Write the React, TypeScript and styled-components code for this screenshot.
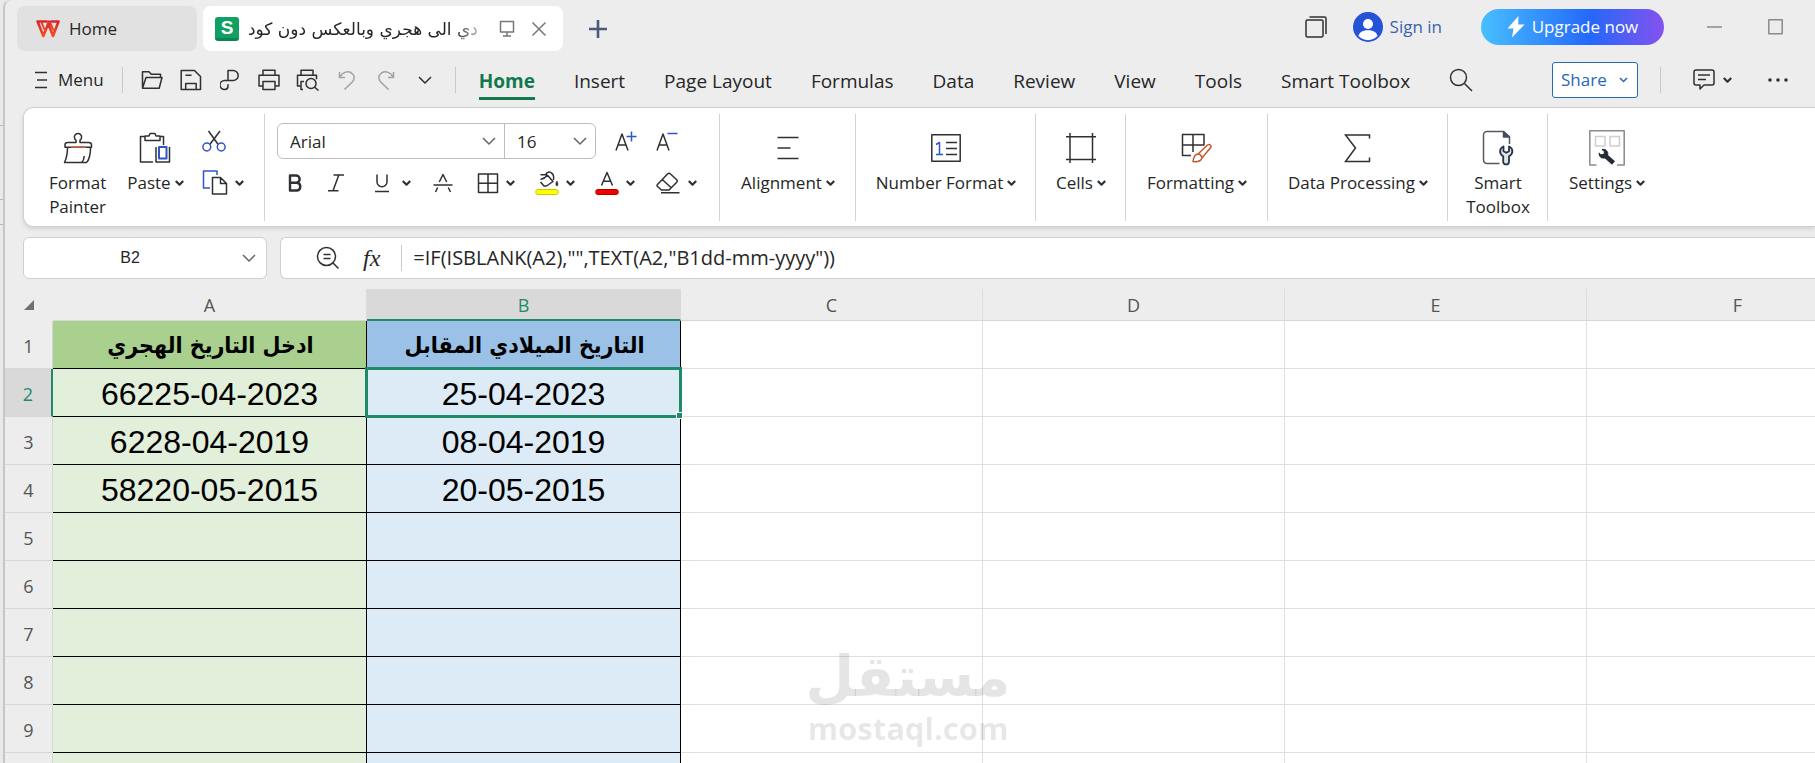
import React from 'react';
import styled, { createGlobalStyle } from 'styled-components';

const INK = '#2f3033';
const BLUE = '#2f55c4';
const GREEN = '#1f8a69';
const UI_FONT = '"Open Sans", "Noto Sans", "DejaVu Sans", sans-serif';

const GlobalStyle = createGlobalStyle`
  *, *::before, *::after { box-sizing: border-box; }
  body { margin: 0; background: #e8e8e8; font-family: ${UI_FONT}; color: #262626; overflow: hidden; }
  button, input, select { font: inherit; color: inherit; }
  svg { display: block; flex: none; }
`;

/* ---------- shell ---------- */

const Desktop = styled.div`
  display: flex;
  height: 100vh;
`;

const BackdropEdge = styled.div`
  flex: none;
  width: 3px;
  padding-top: 125px;
  background: #e9e9e9;
`;

const BackdropLine = styled.div<{ $gap: number }>`
  height: 1px;
  margin-bottom: ${(p) => p.$gap}px;
  background: #b9b9b9;
`;

const Window = styled.div`
  flex: 1;
  min-width: 0;
  display: flex;
  flex-direction: column;
  background: #ededed;
  border-left: 2px solid #c6c6c6;
  border-top-left-radius: 8px;
`;

const PlainButton = styled.button`
  display: flex;
  align-items: center;
  padding: 0;
  border: 0;
  background: none;
  white-space: nowrap;
  cursor: pointer;
`;

const Separator = styled.div`
  flex: none;
  width: 1px;
  height: 26px;
  background: #c9c9c9;
`;

/* ---------- title bar ---------- */

const TitleBar = styled.header`
  display: flex;
  align-items: center;
  height: 52px;
  padding: 6px 32px 1px 12px;
`;

const HomeTab = styled(PlainButton)`
  width: 180px;
  height: 45px;
  padding-left: 19px;
  gap: 9px;
  border-radius: 8px;
  background: #e1e1e1;
  font-size: 17px;
`;

const FileTab = styled.div`
  display: flex;
  align-items: center;
  width: 360px;
  height: 45px;
  margin: 0 26px 0 6px;
  padding: 0 16px 0 12px;
  border-radius: 8px;
  background: #fff;
`;

const SheetBadge = styled.span`
  flex: none;
  width: 24px;
  height: 24px;
  border-radius: 3px;
  background: linear-gradient(#10a063 86%, #0b8450 86%);
  color: #fff;
  font: bold 19px/22px "Liberation Sans", sans-serif;
  text-align: center;
`;

const FileName = styled.span`
  flex: 1;
  min-width: 0;
  margin: 0 8px 0 9px;
  direction: rtl;
  display: flex;
  justify-content: flex-end;
  overflow: hidden;
  white-space: nowrap;
  font-family: "DejaVu Sans", sans-serif;
  font-size: 17px;
  line-height: 32px;
  mask-image: linear-gradient(to left, transparent, #000 36px);
`;

const CloseButton = styled(PlainButton)`
  margin-left: 15px;
`;

const TitleActions = styled.div`
  display: flex;
  align-items: center;
  height: 36px;
  margin: 0 0 4px auto;
`;

const SignIn = styled(PlainButton)`
  gap: 7px;
  margin: 0 39px 0 26px;
  color: #3c63ae;
  font-size: 17px;
`;

const Upgrade = styled(PlainButton)`
  width: 183px;
  height: 36px;
  margin-right: 43px;
  justify-content: center;
  gap: 7px;
  border-radius: 18px;
  background: linear-gradient(90deg, #48bfff, #2468fa 60%, #8552ee);
  color: #fff;
  font-size: 17px;
`;

const WindowButton = styled(PlainButton)`
  & + & { margin-left: 46px; }
`;

/* ---------- menu bar ---------- */

const MenuBar = styled.nav`
  display: flex;
  align-items: center;
  height: 55px;
  padding: 0 27px 0 30px;
`;

const MenuButton = styled(PlainButton)`
  gap: 11px;
  margin-right: 18px;
  font-size: 17px;
`;

const QuickTools = styled.div`
  display: flex;
  gap: 17px;
  margin: 0 19px 0 18px;
`;

const QuickButton = styled(PlainButton)`
  width: 22px;
  height: 24px;
  justify-content: center;
`;

const MenuTabs = styled.div`
  display: flex;
  align-items: center;
  gap: 39px;
  margin: 1px 0 0 23px;
`;

const MenuTab = styled(PlainButton)<{ $active?: boolean }>`
  height: 40px;
  padding-top: 4px;
  border-bottom: 3px solid ${(p) => (p.$active ? '#12784f' : 'transparent')};
  color: ${(p) => (p.$active ? '#12784f' : '#262626')};
  font-size: 19px;
  font-weight: ${(p) => (p.$active ? 700 : 400)};
`;

const MenuRight = styled.div`
  display: flex;
  align-items: center;
  margin-left: auto;
`;

const ShareButton = styled(PlainButton)`
  width: 86px;
  height: 36px;
  margin-right: 22px;
  padding: 0 9px 0 8px;
  justify-content: space-between;
  border: 1px solid #2768b8;
  border-radius: 3px;
  background: #fff;
  color: #2768b8;
  font-size: 17px;
`;

const CommentButton = styled(PlainButton)`
  gap: 8px;
  margin: 0 36px 0 32px;
`;

/* ---------- ribbon ---------- */

const Ribbon = styled.section`
  display: flex;
  height: 120px;
  margin-left: 18px;
  flex: none;
  border: 1px solid #d0d0d0;
  border-right: 0;
  border-radius: 10px 0 0 10px;
  background: #fff;
  box-shadow: 0 2px 4px rgba(0, 0, 0, 0.12);
`;

const Group = styled.div<{ $width: number; $start?: number }>`
  position: relative;
  flex: none;
  display: flex;
  justify-content: ${(p) => (p.$start === undefined ? 'center' : 'flex-start')};
  width: ${(p) => p.$width}px;
  padding-left: ${(p) => p.$start ?? 0}px;

  &:not(:last-child)::after {
    content: '';
    position: absolute;
    right: 0;
    top: 6px;
    bottom: 5px;
    width: 1px;
    background: #d3d3d3;
  }
`;

const BigButton = styled(PlainButton)<{ $gap?: number }>`
  flex-direction: column;
  gap: 5px;
  padding-top: 22px;
  align-items: center;
  justify-content: flex-start;
  font-size: 17px;
  line-height: 24px;
  margin-right: ${(p) => p.$gap ?? 0}px;
`;

const BigIcon = styled.span`
  display: grid;
  place-items: center;
  height: 36px;
`;

const BigLabel = styled.span`
  display: flex;
  align-items: center;
  gap: 4px;
  white-space: pre-line;
`;

const ToolColumn = styled.div`
  display: flex;
  flex-direction: column;
  gap: 6px;
  padding-top: 15px;
`;

const ToolRow = styled.div<{ $gap?: number; $indent?: number }>`
  display: flex;
  align-items: center;
  height: 36px;
  gap: ${(p) => p.$gap ?? 20}px;
  padding-left: ${(p) => p.$indent ?? 0}px;
`;

const Tool = styled(PlainButton)`
  gap: 7px;
`;

const SelectPair = styled.div`
  display: flex;
  height: 36px;
  border: 1px solid #bdbdbd;
  border-radius: 6px;
`;

const SelectBox = styled.label<{ $width: number }>`
  display: flex;
  align-items: center;
  width: ${(p) => p.$width}px;
  padding-right: 8px;
  & + & { border-left: 1px solid #bdbdbd; }
`;

const Select = styled.select`
  flex: 1;
  min-width: 0;
  height: 100%;
  padding: 1px 0 0 12px;
  border: 0;
  background: none;
  appearance: none;
  font-size: 17px;
`;

/* ---------- formula bar ---------- */

const FormulaBar = styled.div`
  display: flex;
  flex: none;
  gap: 13px;
  padding: 10px 0 10px 18px;
`;

const NameBox = styled.label`
  display: flex;
  align-items: center;
  width: 244px;
  height: 42px;
  padding-right: 10px;
  border: 1px solid #cfcfcf;
  border-radius: 6px;
  background: #fff;
`;

const NameInput = styled.input`
  flex: 1;
  min-width: 0;
  padding: 0 6px 0 0;
  border: 0;
  background: none;
  font: 16px "Liberation Sans", sans-serif;
  text-align: center;
`;

const FormulaBox = styled.div`
  flex: 1;
  display: flex;
  align-items: center;
  height: 42px;
  padding-left: 35px;
  border: 1px solid #cfcfcf;
  border-right: 0;
  border-radius: 6px 0 0 6px;
  background: #fff;
`;

const FxButton = styled(PlainButton)`
  margin: 0 21px 0 23px;
  font: italic 24px/30px "Liberation Serif", serif;
`;

const FormulaInput = styled.input`
  flex: 1;
  min-width: 0;
  padding: 0 0 0 11px;
  border: 0;
  background: none;
  font-size: 20px;
  line-height: 28px;
`;

/* ---------- sheet ---------- */

const SheetArea = styled.main`
  position: relative;
  flex: 1;
  min-height: 0;
  overflow: hidden;
`;

const Sheet = styled.table`
  table-layout: fixed;
  width: 1884px;
  border-collapse: separate;
  border-spacing: 0;
`;

const ColHead = styled.th<{ $active?: boolean }>`
  height: 32px;
  padding: 1px 0 0;
  border-right: 1px solid ${(p) => (p.$active ? '#d9d9d9' : '#dedede')};
  border-bottom: ${(p) => (p.$active ? `2px solid ${GREEN}` : '1px solid #d6d6d6')};
  background: ${(p) => (p.$active ? '#d9d9d9' : '#ededed')};
  color: ${(p) => (p.$active ? GREEN : '#555')};
  font-size: 18px;
  line-height: 24px;
  font-weight: 400;
`;

const Corner = styled.td`
  padding: 0;
  background: #ededed;
  svg { margin: 0 auto; }
`;

const RowHead = styled.th<{ $active?: boolean }>`
  height: 48px;
  padding: 3px 0 0;
  border-right: ${(p) => (p.$active ? `2px solid ${GREEN}` : '1px solid #d6d6d6')};
  border-bottom: 1px solid #d6d6d6;
  background: ${(p) => (p.$active ? '#d9d9d9' : '#ededed')};
  color: ${(p) => (p.$active ? GREEN : '#555')};
  font-size: 18px;
  line-height: 24px;
  font-weight: 400;
`;

const Cell = styled.td<{ $fill?: string; $head?: boolean }>`
  position: relative;
  height: 48px;
  padding: ${(p) => (p.$head ? '0' : '2px 0 0')};
  border-right: 1px solid ${(p) => (p.$fill ? '#000' : '#dfdfdf')};
  border-bottom: 1px solid ${(p) => (p.$fill ? '#000' : '#dfdfdf')};
  background: ${(p) => p.$fill ?? '#fff'};
  color: #000;
  font-family: ${(p) => (p.$head ? '"DejaVu Sans Condensed", "DejaVu Sans"' : '"Liberation Sans"')}, sans-serif;
  font-size: ${(p) => (p.$head ? 23 : 32)}px;
  line-height: 36px;
  font-weight: ${(p) => (p.$head ? 700 : 400)};
  text-align: center;
  white-space: nowrap;
`;

const Selection = styled.span`
  position: absolute;
  inset: -2px;
  border: 3px solid ${GREEN};
  z-index: 1;

  &::after {
    content: '';
    position: absolute;
    right: -4px;
    bottom: -4px;
    width: 7px;
    height: 7px;
    border: 1px solid #fff;
    background: ${GREEN};
  }
`;

const Watermark = styled.div`
  position: absolute;
  left: 0;
  right: 4px;
  bottom: 17px;
  display: flex;
  flex-direction: column;
  align-items: center;
  color: rgba(0, 0, 0, 0.1);
  font-weight: 700;
  pointer-events: none;
  z-index: 2;
`;

const MarkArabic = styled.span`
  font-family: "DejaVu Sans", sans-serif;
  font-size: 56px;
  line-height: 66px;
`;

const MarkLatin = styled.span`
  font-size: 31px;
  line-height: 36px;
`;

/* ---------- icons ---------- */

type IconProps = { w: number; h: number; children: React.ReactNode; color?: string; sw?: number };

const Icon = ({ w, h, children, color = INK, sw = 1.5 }: IconProps) => (
  <svg width={w} height={h} viewBox={`0 0 ${w} ${h}`} fill="none" stroke={color} strokeWidth={sw} strokeLinejoin="round" aria-hidden="true">
    {children}
  </svg>
);

const Caret = ({ color = INK }: { color?: string }) => (
  <Icon w={9} h={8} color={color} sw={2.2}><path d="M.8 2l3.700 3.700L8.200 2" /></Icon>
);

const WideCaret = ({ color = '#666' }: { color?: string }) => (
  <Icon w={14} h={10} color={color}><path d="M1 2l6 6 6-6" /></Icon>
);

const BrandIcon = () => (
  <svg width="24" height="18" viewBox="0 0 24 18" fill="none" strokeLinejoin="round" aria-hidden="true">
    <defs>
      <linearGradient id="brand" x2="0" y2="1"><stop stopColor="#d8242c" /><stop offset="1" stopColor="#f4501e" /></linearGradient>
    </defs>
    <path d="M10.500 1.500H1.600L7.300 16l5-12.500L17 16l5.500-14.500h-7" stroke="url(#brand)" strokeWidth="2.600" />
    <path d="M5.500 2.500l3.700 8.500M14 2.500l3.700 8M10 1.500h6" stroke="url(#brand)" strokeWidth="1.800" />
  </svg>
);

const quickIcons: [string, React.ReactNode][] = [
  ['Open', <Icon w={22} h={20}><path d="M1.500 17.500V1.700h6.500l2.300 2.500h9.200v3.300M1.500 18.200L5 7.500h16l-2.800 10.700z" /></Icon>],
  ['Save', <Icon w={22} h={22}><path d="M1.200 1.500h13.300l6 6v13H1.200zM5.700 20.500v-6h10.500v6M5.500 6.200h6" /></Icon>],
  ['Export', <Icon w={20} h={22}><path d="M8 11.500V1.500h5.200a5 5 0 0 1 0 10H4.500a3.300 3.300 0 0 0 0 9h.3A3.300 3.300 0 0 0 8 17.200v-2" /></Icon>],
  ['Print', <Icon w={22} h={22}><path d="M5 6V1.300h12V6M5 17H1V6.200h20V17h-4M5 12.500h12v8H5z" /></Icon>],
  ['Print preview', <Icon w={24} h={22}><path d="M5 6V1.300h12V6M7 20.500H5V17H1.500V6.200h19v4M5 17v-4.500h3" /><circle cx="15" cy="14.500" r="5" /><path d="M18.700 18.200L22.500 21.500" /></Icon>],
  ['Undo', <Icon w={18} h={20} color="#a2a2a2"><path d="M1.500 2v5.500H7M2 7C5 1.500 10 .8 13.500 3c3.500 2.500 3.200 6 1 8.700L6.500 19.500" /></Icon>],
  ['Redo', <Icon w={18} h={20} color="#a2a2a2"><path d="M16.500 2v5.500H11M16 7C13 1.500 8 .8 4.500 3c-3.500 2.500-3.200 6-1 8.700l8 7.800" /></Icon>],
  ['More', <WideCaret color={INK} />],
];

const PainterIcon = () => (
  <Icon w={30} h={32}>
    <path d="M13 10.500V8.200a3.600 3.600 0 1 1 4 0v2.300h8.500c1.700 0 3 1 3 2.500v2.300H2V13c0-1.500 1-2.500 2.500-2.500zM4.500 15.500c0 5-.6 10-3 15h22c2.500-2 4.200-9 4-15M18.500 30.500c1.800-1.500 2.600-3.700 2.800-6.500" />
    <path d="M8 15.300h15" stroke="#c8562a" />
  </Icon>
);

const PasteIcon = () => (
  <Icon w={32} h={32}>
    <path d="M14 30H1.500V4.500H6M21 4.500h3.500V13M6 8.500V4h4l1-2.500h5L17 4h4v4.500zM17 15v15h13.500V15" />
    <path d="M20 15h7.500v11.500H20z" stroke={BLUE} strokeWidth="2" />
  </Icon>
);

const CutIcon = () => (
  <Icon w={24} h={22}>
    <path d="M6.500 1l9.700 13.500M18 1L7.800 14.500" />
    <g stroke={BLUE}><circle cx="4.800" cy="17" r="3.900" /><circle cx="19.200" cy="17" r="3.900" /></g>
  </Icon>
);

const CopyIcon = () => (
  <Icon w={26} h={26}>
    <path d="M15 5V1H1.500v17H8" stroke={BLUE} />
    <path d="M10.500 7.500h8l6 6V24h-14zM18.500 7.500v6h6" />
  </Icon>
);

const AlignIcon = () => <Icon w={22} h={24}><path d="M.5 1.500h21M.5 12h13M.5 22.500h21" /></Icon>;

const NumberIcon = () => (
  <Icon w={30} h={28}>
    <path d="M.8.800h28.400v26.400H.8zM15 8.500h11M15 14.500h11M15 20.500h11" />
    <path d="M5 10.500l3.500-2V20.500M5 20.500h7" stroke={BLUE} />
  </Icon>
);

const CellsIcon = () => <Icon w={30} h={30}><path d="M4 0v30M26.500 0v30M0 3.800h30M0 26.500h30" /></Icon>;

const FormattingIcon = () => (
  <Icon w={32} h={30}>
    <path d="M10 22.500H1.500V1.500H23v10.500H1.500M12 1.500V19" />
    <path d="M17 21l9.500-9c2-1.500 4.500.6 3 2.800L21 25M17 21c1.800.2 3.500 2 4 4-1 3-5 4-9 3.500C12.500 25 13.500 21 17 21z" stroke="#c8562a" />
  </Icon>
);

const SigmaIcon = () => <Icon w={28} h={30}><path d="M25.500 5.500V2H1.500l10 13-10 13.500h24v-4" strokeLinejoin="miter" /></Icon>;

const ToolboxIcon = () => (
  <Icon w={34} h={36}>
    <path d="M18.500 33.500H6a3.500 3.500 0 0 1-3.500-3.500V5A3.500 3.500 0 0 1 6 1.500h16.500l6 5.500v7" stroke="#55585c" />
    <path d="M22.500 1.500V7h6z" fill="#45505e" stroke="#45505e" />
    <path d="M22.500 16.500c-4.500 2-4.500 7.500-.3 9.700v6a3 3 0 0 0 5.800 0v-6c4.500-2.200 4.500-7.700 0-9.700v4.800l-2.700 1.500-2.800-1.500z" fill="#dfe3ea" stroke="#273244" strokeWidth="1.800" />
  </Icon>
);

const SettingsIcon = () => (
  <Icon w={36} h={36}>
    <path d="M7.500 35H.8V.8h34.400V35H28" stroke="#8a8a8a" />
    <path d="M6.500 6.500h9.500v9.500H6.500zM21 6.500h9.500v9.500H21z" stroke="#cfcfcf" />
    <path d="M24.500 33L15.500 25" stroke="#222b36" strokeWidth="4.500" />
    <path d="M13 19.500l2.500 2.200-.7 2.800-3.300.2-1.300-1.800c-.5 3 1.500 5.300 4.300 5.200 3 0 4.600-2.300 4.300-4.700-.3-2.800-3-4.800-5.800-3.900z" fill="#222b36" stroke="#222b36" strokeWidth="1" />
  </Icon>
);

const BoldIcon = () => <Icon w={24} h={24} sw={2.4}><path d="M7 4.500h6a3.600 3.600 0 0 1 0 7.300H7zM7 11.800h7a3.900 3.900 0 0 1 0 7.700H7z" /></Icon>;
const ItalicIcon = () => <Icon w={24} h={24}><path d="M6.500 4H17M1 19.800h10.500M11.800 4L6 19.800" /></Icon>;
const UnderlineIcon = () => <Icon w={24} h={24}><path d="M6 3.500v7.300a5 5 0 0 0 10 0V3.500M4 20.500h14" /></Icon>;
const StrikeIcon = () => <Icon w={24} h={24}><path d="M2.500 14h19M8.300 11L12 3.500l3.700 7.500M6.700 16.500L4.500 21M17.300 16.500l2.200 4.500" /></Icon>;
const BordersIcon = () => <Icon w={24} h={24}><path d="M3.500 3h19v18.500h-19zM13 3v18.500M3.500 12.200h19" /></Icon>;
const FillIcon = () => (
  <Icon w={24} h={26}>
    <path d="M5.500 4.800h6.500M10.500 4.500C12 1.800 14.500 1.500 16.500 3c2 1.300 2.500 4 2 7M5.500 9.500c3-.5 5-2 7-4.300l5.500 6.300-6.500 4.500H9L5.500 12" />
    <path d="M22 11c1.500 2.500.8 5 0 5s-2-2 0-5z" fill={INK} strokeWidth=".6" />
    <rect x=".8" y="19.500" width="22.400" height="5" rx="2" fill="#ffff00" stroke="#c9c900" strokeWidth="1" />
  </Icon>
);
const FontColorIcon = () => (
  <Icon w={24} h={26}>
    <path d="M6.500 15.500L12 2.500l5.500 13M8.500 11.200h7" />
    <rect x=".8" y="19.500" width="22.400" height="5" rx="2" fill="#f00000" stroke="#b00000" strokeWidth="1" />
  </Icon>
);
const EraserIcon = () => (
  <Icon w={26} h={24}>
    <path d="M2.500 13.500L12.500 3c1-1 2-1 3 0l6 5.500c1 1 1 2 0 3l-7.500 7.500H6.500l-4-3.500c-.7-.7-.7-1.300 0-2zM7.500 8.700l9 8.300M6 21.800h18.500" />
  </Icon>
);
const GrowIcon = () => (
  <Icon w={22} h={22}><path d="M1 20.500L7 4l6 16.500M3 15h8" /><path d="M11.500 6.500h10M16.500 1.500v10" stroke={BLUE} /></Icon>
);
const ShrinkIcon = () => (
  <Icon w={22} h={22}><path d="M1 20.500L7 4l6 16.500M3 15h8" /><path d="M11.500 3.500h10" stroke={BLUE} /></Icon>
);

/* ---------- content ---------- */

const menuTabs = ['Home', 'Insert', 'Page Layout', 'Formulas', 'Data', 'Review', 'View', 'Tools', 'Smart Toolbox'];

const ribbonGroups: { label: string; width: number; icon: React.ReactNode; caret?: boolean }[] = [
  { label: 'Alignment', width: 136, icon: <AlignIcon />, caret: true },
  { label: 'Number Format', width: 180, icon: <NumberIcon />, caret: true },
  { label: 'Cells', width: 90, icon: <CellsIcon />, caret: true },
  { label: 'Formatting', width: 142, icon: <FormattingIcon />, caret: true },
  { label: 'Data Processing', width: 180, icon: <SigmaIcon />, caret: true },
  { label: 'Smart\nToolbox', width: 100, icon: <ToolboxIcon /> },
  { label: 'Settings', width: 118, icon: <SettingsIcon />, caret: true },
];

const columns = [
  { name: 'A', width: 314 },
  { name: 'B', width: 314 },
  { name: 'C', width: 302 },
  { name: 'D', width: 302 },
  { name: 'E', width: 302 },
  { name: 'F', width: 302 },
];

type SheetRow = { label: string; values: [string, string] };

const rows: SheetRow[] = [
  { label: '1', values: ['ادخل التاريخ الهجري', 'التاريخ الميلادي المقابل'] },
  { label: '2', values: ['66225-04-2023', '25-04-2023'] },
  { label: '3', values: ['6228-04-2019', '08-04-2019'] },
  { label: '4', values: ['58220-05-2015', '20-05-2015'] },
  { label: '5', values: ['', ''] },
  { label: '6', values: ['', ''] },
  { label: '7', values: ['', ''] },
  { label: '8', values: ['', ''] },
  { label: '9', values: ['', ''] },
  { label: '', values: ['', ''] },
];

const fills = [
  { head: '#a9d08e', body: '#e2efda' },
  { head: '#9bc2e6', body: '#ddebf7' },
];

function Title() {
  return (
    <TitleBar>
      <HomeTab><BrandIcon />Home</HomeTab>
      <FileTab>
        <SheetBadge>S</SheetBadge>
        <FileName>دي الى هجري وبالعكس دون كود</FileName>
        <Icon w={18} h={18} color="#777"><path d="M2.500 1.500h13v10.500h-13zM9 12v3.500M5 16h8" /></Icon>
        <CloseButton aria-label="Close tab">
          <Icon w={16} h={16} color="#777"><path d="M1.500 1.500l13 13M14.500 1.500l-13 13" /></Icon>
        </CloseButton>
      </FileTab>
      <PlainButton aria-label="New tab">
        <Icon w={18} h={18} color="#4b5a7c" sw={2.6}><path d="M9 0v18M0 9h18" /></Icon>
      </PlainButton>
      <TitleActions>
        <PlainButton aria-label="Windows">
          <Icon w={22} h={22}><rect x="1" y="4" width="17" height="17" rx="1.500" /><path d="M4.500 1h15a1.500 1.500 0 0 1 1.500 1.500V18" /></Icon>
        </PlainButton>
        <SignIn>
          <svg width="30" height="30" viewBox="0 0 30 30" aria-hidden="true">
            <circle cx="15" cy="15" r="15" fill="#2553d8" />
            <circle cx="15" cy="12" r="5" fill="#fff" />
            <path d="M5.500 24c1-4.300 5-5.800 9.500-5.800s8.500 1.500 9.500 5.800A13 13 0 0 1 5.500 24z" fill="#fff" />
          </svg>
          Sign in
        </SignIn>
        <Upgrade>
          <svg width="18" height="22" viewBox="0 0 18 22" aria-hidden="true"><path d="M11.500 0L.5 12.500h6L5 21.500 17.500 8.500h-6.300z" fill="#fff" /></svg>
          Upgrade now
        </Upgrade>
        <WindowButton aria-label="Minimize"><Icon w={15} h={16} color="#8a8a8a"><path d="M0 8h15" /></Icon></WindowButton>
        <WindowButton aria-label="Maximize"><Icon w={15} h={16} color="#8a8a8a"><path d="M.8.800h13.400v14H.8z" /></Icon></WindowButton>
      </TitleActions>
    </TitleBar>
  );
}

function Menu() {
  return (
    <MenuBar>
      <MenuButton>
        <Icon w={12} h={18}><path d="M0 1.500h12M2 9h10M0 16.500h12" /></Icon>
        Menu
      </MenuButton>
      <Separator />
      <QuickTools>
        {quickIcons.map(([name, icon]) => <QuickButton key={name} aria-label={name}>{icon}</QuickButton>)}
      </QuickTools>
      <Separator />
      <MenuTabs>
        {menuTabs.map((t, i) => <MenuTab key={t} $active={i === 0}>{t}</MenuTab>)}
        <PlainButton aria-label="Search">
          <Icon w={24} h={24}><circle cx="9.500" cy="9.500" r="8" /><path d="M15.500 15.500l7.500 7.500" /></Icon>
        </PlainButton>
      </MenuTabs>
      <MenuRight>
        <ShareButton>Share<Icon w={9} h={8} color="#2768b8"><path d="M1 2l3.500 3.500L8 2" /></Icon></ShareButton>
        <Separator />
        <CommentButton aria-label="Comments">
          <Icon w={22} h={21}><path d="M3 1h16a2 2 0 0 1 2 2v11a2 2 0 0 1-2 2h-8l-4 4v-4H3a2 2 0 0 1-2-2V3a2 2 0 0 1 2-2zM5 6h12M5 10.500h8" /></Icon>
          <Caret />
        </CommentButton>
        <PlainButton aria-label="More options">
          <svg width="20" height="4" viewBox="0 0 20 4" fill={INK} aria-hidden="true"><circle cx="2" cy="2" r="1.800" /><circle cx="10" cy="2" r="1.800" /><circle cx="18" cy="2" r="1.800" /></svg>
        </PlainButton>
      </MenuRight>
    </MenuBar>
  );
}

function RibbonPanel() {
  return (
    <Ribbon>
      <Group $width={241} $start={25}>
        <BigButton $gap={21}>
          <BigIcon><PainterIcon /></BigIcon>
          <BigLabel>{'Format\nPainter'}</BigLabel>
        </BigButton>
        <BigButton $gap={18}>
          <BigIcon><PasteIcon /></BigIcon>
          <BigLabel>Paste<Caret /></BigLabel>
        </BigButton>
        <ToolColumn>
          <ToolRow><Tool aria-label="Cut"><CutIcon /></Tool></ToolRow>
          <ToolRow><Tool aria-label="Copy"><CopyIcon /><Caret /></Tool></ToolRow>
        </ToolColumn>
      </Group>
      <Group $width={455} $start={12}>
        <ToolColumn>
          <ToolRow $gap={19}>
            <SelectPair>
              <SelectBox $width={226}>
                <Select aria-label="Font" defaultValue="Arial"><option>Arial</option></Select>
                <WideCaret />
              </SelectBox>
              <SelectBox $width={91}>
                <Select aria-label="Font size" defaultValue="16"><option>16</option></Select>
                <WideCaret />
              </SelectBox>
            </SelectPair>
            <Tool aria-label="Increase font size"><GrowIcon /></Tool>
            <Tool aria-label="Decrease font size"><ShrinkIcon /></Tool>
          </ToolRow>
          <ToolRow $indent={6}>
            <Tool aria-label="Bold"><BoldIcon /></Tool>
            <Tool aria-label="Italic"><ItalicIcon /></Tool>
            <Tool aria-label="Underline"><UnderlineIcon /><Caret /></Tool>
            <Tool aria-label="Strikethrough"><StrikeIcon /></Tool>
            <Tool aria-label="Borders"><BordersIcon /><Caret /></Tool>
            <Tool aria-label="Fill color"><FillIcon /><Caret /></Tool>
            <Tool aria-label="Font color"><FontColorIcon /><Caret /></Tool>
            <Tool aria-label="Clear"><EraserIcon /><Caret /></Tool>
          </ToolRow>
        </ToolColumn>
      </Group>
      {ribbonGroups.map((g) => (
        <Group key={g.label} $width={g.width}>
          <BigButton>
            <BigIcon>{g.icon}</BigIcon>
            <BigLabel>{g.label}{g.caret && <Caret />}</BigLabel>
          </BigButton>
        </Group>
      ))}
    </Ribbon>
  );
}

function Formula() {
  return (
    <FormulaBar>
      <NameBox>
        <NameInput aria-label="Name box" defaultValue="B2" />
        <WideCaret />
      </NameBox>
      <FormulaBox>
        <PlainButton aria-label="Look up">
          <Icon w={24} h={24}><circle cx="10.500" cy="10.500" r="9" /><path d="M17 17l5.500 5.500M7.500 8.500h7M7.500 12.500h7" /></Icon>
        </PlainButton>
        <FxButton aria-label="Insert function">fx</FxButton>
        <Separator />
        <FormulaInput aria-label="Formula" defaultValue={'=IF(ISBLANK(A2),"",TEXT(A2,"B1dd-mm-yyyy"))'} />
      </FormulaBox>
    </FormulaBar>
  );
}

function Grid() {
  return (
    <SheetArea>
      <Sheet>
        <colgroup>
          <col width={48} />
          {columns.map((c) => <col key={c.name} width={c.width} />)}
        </colgroup>
        <thead>
          <tr>
            <Corner>
              <svg width="10" height="10" viewBox="0 0 10 10" aria-hidden="true"><path d="M10 0v10H0z" fill="#707070" /></svg>
            </Corner>
            {columns.map((c) => <ColHead key={c.name} scope="col" $active={c.name === 'B'}>{c.name}</ColHead>)}
          </tr>
        </thead>
        <tbody>
          {rows.map((row, r) => (
            <tr key={r}>
              <RowHead scope="row" $active={r === 1}>{row.label}</RowHead>
              {columns.map((c, i) => (
                <Cell key={c.name} $head={r === 0} $fill={fills[i] && (r === 0 ? fills[i].head : fills[i].body)} dir="auto">
                  {row.values[i]}
                  {r === 1 && i === 1 && <Selection />}
                </Cell>
              ))}
            </tr>
          ))}
        </tbody>
      </Sheet>
      <Watermark>
        <MarkArabic>مستقل</MarkArabic>
        <MarkLatin>mostaql.com</MarkLatin>
      </Watermark>
    </SheetArea>
  );
}

export default function App() {
  return (
    <Desktop>
      <GlobalStyle />
      <BackdropEdge>
        <BackdropLine $gap={73} />
        <BackdropLine $gap={24} />
        <BackdropLine $gap={0} />
      </BackdropEdge>
      <Window>
        <Title />
        <Menu />
        <RibbonPanel />
        <Formula />
        <Grid />
      </Window>
    </Desktop>
  );
}
